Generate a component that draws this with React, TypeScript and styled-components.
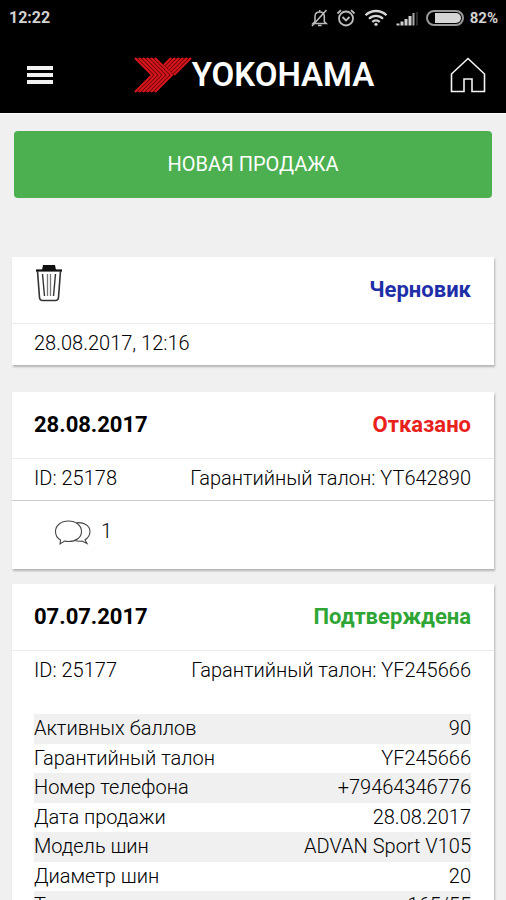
import React from "react";
import styled, { createGlobalStyle } from "styled-components";

const GlobalStyle = createGlobalStyle`
  *, *::before, *::after { box-sizing: border-box; }
  body {
    margin: 0;
    background: #f0f0f0;
    color: #000;
    font-family: Roboto, "Liberation Sans", sans-serif;
    font-size: 20px;
    font-weight: 300;
    line-height: 24px;
  }
`;

const Screen = styled.div`
  display: flex;
  flex-direction: column;
  height: 100vh;
`;

const StatusBar = styled.div`
  display: flex;
  flex: none;
  align-items: center;
  justify-content: space-between;
  height: 36px;
  padding: 0 8px 0 9px;
  background: #000;
  color: #d2d2d2;
  font-size: 16px;
  font-weight: 700;
`;

const StatusIcons = styled.div`
  display: flex;
  align-items: center;
  gap: 8px;
  font-size: 15px;

  svg { display: block; }
`;

const Battery = styled.div`
  display: flex;
  align-items: center;
  gap: 6px;
`;

const AppBar = styled.header`
  display: flex;
  flex: none;
  align-items: center;
  justify-content: space-between;
  height: 77px;
  padding: 0 20px 0 26px;
  background: #000;
`;

const IconButton = styled.button`
  display: block;
  padding: 0;
  border: 0;
  background: none;
  color: inherit;
  cursor: pointer;

  svg { display: block; }
`;

const HomeLink = styled.a`
  display: block;
  svg { display: block; }
`;

const Brand = styled.div`
  display: flex;
  align-items: center;
  margin-left: 4px;
  color: #fff;
  font-family: Roboto, Arial, sans-serif;
  font-size: 33px;
  font-weight: 600;
  line-height: 36px;
`;

const Content = styled.main`
  flex: 1;
  min-height: 0;
  overflow-y: auto;
  scrollbar-width: none;
  padding: 17px 12px 0;
  border-top: 1px solid #fff;
`;

const NewSaleButton = styled.button`
  display: block;
  width: calc(100% - 4px);
  height: 67px;
  margin: 0 2px 59px;
  padding: 0 0 2px;
  border: 0;
  border-radius: 4px;
  background: #4caf50;
  color: #fff;
  font: inherit;
  font-weight: 400;
  cursor: pointer;
`;

const Card = styled.article<{ $gap: number }>`
  margin-bottom: ${(p) => p.$gap}px;
  background: #fff;
  box-shadow: 1px 2px 2px rgba(0, 0, 0, 0.25);
`;

const CardHead = styled.div`
  display: flex;
  align-items: center;
  justify-content: space-between;
  height: 67px;
  padding: 0 23px 0 22px;
  border-bottom: 1px solid #ececec;
  font-size: 22px;
  font-weight: 700;
`;

const CardDate = styled.h2`
  margin: 0;
  font: inherit;
`;

const Status = styled.span<{ $color: string }>`
  color: ${(p) => p.$color};
`;

const TrashButton = styled(IconButton)`
  align-self: flex-start;
  margin: 7px 0 0 1px;
`;

const CardRow = styled.div`
  display: flex;
  justify-content: space-between;
  height: 41px;
  padding: 7px 23px 0 22px;
`;

const Comments = styled.button`
  display: flex;
  align-items: flex-start;
  gap: 9px;
  width: 100%;
  height: 69px;
  padding: 18px 42px 0;
  border: 0;
  border-top: 1px solid #ccc;
  background: none;
  color: inherit;
  font: inherit;
  cursor: pointer;
`;

const Details = styled.table`
  width: calc(100% - 45px);
  margin: 22px 23px 22px 22px;
  border-collapse: collapse;

  tr { height: 29px; }
  tr:nth-child(odd) { height: 30px; background: #f0f0f0; }
  th, td { padding: 0 0 2px; font-weight: inherit; }
  th { text-align: left; }
  td { text-align: right; }
`;

const MutedBellIcon = () => (
  <svg width="17" height="18" viewBox="0 0 17 18" fill="none" stroke="#bdbdbd" strokeWidth="1.5">
    <path d="M4 12.5V7.5C4 4.5 6 3 8.7 3s4.6 1.5 4.6 4.5v5l2 2H2L4 12.5zM8.7 1v2M7 16.5h3.6" />
    <path d="M1 17 15.5 1" />
  </svg>
);

const AlarmIcon = () => (
  <svg width="20" height="18" viewBox="0 0 20 18" fill="none" stroke="#bdbdbd" strokeWidth="1.8">
    <circle cx="10" cy="9.500" r="7" />
    <path d="m6.500 8 3.500 3.500L13.500 8M1.500 4.500 5 1.200M18.500 4.500 15 1.200" />
  </svg>
);

const WifiIcon = () => (
  <svg width="24" height="18" viewBox="0 0 24 18" fill="none" stroke="#d6d6d6" strokeWidth="2.300">
    <path d="M1.500 6.300a15 15 0 0 1 21 0M5 9.700a10 10 0 0 1 14 0M8.300 13a5.300 5.300 0 0 1 7.400 0" />
    <circle cx="12" cy="15.300" r="1.600" fill="#d6d6d6" stroke="none" />
  </svg>
);

const SignalIcon = () => (
  <svg width="22" height="18" viewBox="0 0 22 18" strokeWidth="3">
    <path d="M2 16.500v-2M6 16.500v-4M10 16.500V10M14 16.500V7" stroke="#cfcfcf" />
    <path d="M17.500 16.500V4" stroke="#a8a8a8" strokeWidth="2" />
    <path d="M21 16.500V3" stroke="#3a3a3a" strokeWidth="1.500" />
  </svg>
);

const BatteryIcon = () => (
  <svg width="38" height="16" viewBox="0 0 38 16">
    <rect x="1" y="1" width="36" height="14" rx="7" fill="#000" stroke="#999" strokeWidth="2" />
    <path d="M9 3h21a5 5 0 0 1 0 10H9z" fill="#d6d6d6" />
  </svg>
);

const MenuIcon = () => (
  <svg width="28" height="20" viewBox="0 0 28 20" fill="#f2f2f2">
    <rect x="1" y="1" width="26" height="4" />
    <rect x="1" y="8" width="26" height="4" />
    <rect x="1" y="15" width="26" height="4" />
  </svg>
);

const HomeIcon = () => (
  <svg width="36" height="36" viewBox="0 0 36 36" fill="none" stroke="#f4f4f4" strokeWidth="1.600">
    <path d="M1.500 17 18 1.500 34.500 17v17.500H22V22h-8v12.500H1.500z" />
  </svg>
);

const CHEVRONS = [0, 1, 2, 3, 4, 5];

const BrandMark = () => (
  <svg width="58" height="36" viewBox="0 0 58 36" fill="none" stroke="#d8151c" strokeWidth="2">
    <path d="M1 1h20l8 8 8-8h19L22 35H1l17-17z" fill="#5c070b" stroke="none" />
    {CHEVRONS.map((k) => (
      <path key={k} d={`M${1 + k * 4} 1l17 17L${1 + k * 4} 35`} />
    ))}
    {CHEVRONS.map((k) => {
      const top = 37 + k * 4;
      const depth = (top - 21) / 2 - 1;
      return <path key={k} d={`M${top} 1l${-depth} ${depth}`} />;
    })}
  </svg>
);

const TrashIcon = () => (
  <svg width="28" height="38" viewBox="0 0 28 38" fill="none" stroke="#333">
    <path d="M8 1h12l1 5H7z" fill="#111" stroke="none" />
    <path d="M1 6.500h26" stroke="#111" strokeWidth="2.200" />
    <path d="M2.500 7 4.500 33.500q.3 3 3 3h13q2.700 0 3-3L25.500 7" strokeWidth="1.600" />
    <path d="m7.500 10 2 22M20.500 10l-2 22" strokeWidth="1.400" />
    <path d="M12.500 10v22M15.500 10v22" stroke="#777" strokeWidth="1.300" />
  </svg>
);

const CommentsIcon = () => (
  <svg width="38" height="28" viewBox="0 0 38 28" fill="none" stroke="#444" strokeWidth="1.100">
    <path d="M21.500 4c8 -1.500 14.500 2.500 14.500 8.500 0 4-2 6.500-5 8.300l2 3.700-5-2.500c-3 .4-5 .2-7-.5" />
    <path d="M6.500 21C3 19 1.500 16 1.500 12.500 1.500 6.500 7 2 14.500 2s13 4.500 13 10.500-5.500 10-13 10c-1.800 0-3-.2-4-.5L6 25z" fill="#fff" />
  </svg>
);

const sale = [
  ["Активных баллов", "90"],
  ["Гарантийный талон", "YF245666"],
  ["Номер телефона", "+79464346776"],
  ["Дата продажи", "28.08.2017"],
  ["Модель шин", "ADVAN Sport V105"],
  ["Диаметр шин", "20"],
  ["Типоразмер", "165/55"],
];

export default function App() {
  return (
    <>
      <GlobalStyle />
      <Screen>
        <StatusBar>
          <span>12:22</span>
          <StatusIcons>
            <MutedBellIcon />
            <AlarmIcon />
            <WifiIcon />
            <SignalIcon />
            <Battery>
              <BatteryIcon />
              <span>82%</span>
            </Battery>
          </StatusIcons>
        </StatusBar>
        <AppBar>
          <IconButton type="button" aria-label="Меню">
            <MenuIcon />
          </IconButton>
          <Brand>
            <BrandMark />
            <span>YOKOHAMA</span>
          </Brand>
          <HomeLink href="#" aria-label="Главная">
            <HomeIcon />
          </HomeLink>
        </AppBar>
        <Content>
          <NewSaleButton type="button">НОВАЯ ПРОДАЖА</NewSaleButton>

          <Card $gap={27}>
            <CardHead>
              <TrashButton type="button" aria-label="Удалить">
                <TrashIcon />
              </TrashButton>
              <Status $color="#1f2fa8">Черновик</Status>
            </CardHead>
            <CardRow>
              <span>28.08.2017, 12:16</span>
            </CardRow>
          </Card>

          <Card $gap={15}>
            <CardHead>
              <CardDate>28.08.2017</CardDate>
              <Status $color="#e9211c">Отказано</Status>
            </CardHead>
            <CardRow>
              <span>ID: 25178</span>
              <span>Гарантийный талон: YT642890</span>
            </CardRow>
            <Comments type="button" aria-label="Комментарии: 1">
              <CommentsIcon />
              <span>1</span>
            </Comments>
          </Card>

          <Card $gap={15}>
            <CardHead>
              <CardDate>07.07.2017</CardDate>
              <Status $color="#2fa536">Подтверждена</Status>
            </CardHead>
            <CardRow>
              <span>ID: 25177</span>
              <span>Гарантийный талон: YF245666</span>
            </CardRow>
            <Details>
              <tbody>
                {sale.map(([label, value]) => (
                  <tr key={label}>
                    <th scope="row">{label}</th>
                    <td>{value}</td>
                  </tr>
                ))}
              </tbody>
            </Details>
          </Card>
        </Content>
      </Screen>
    </>
  );
}
